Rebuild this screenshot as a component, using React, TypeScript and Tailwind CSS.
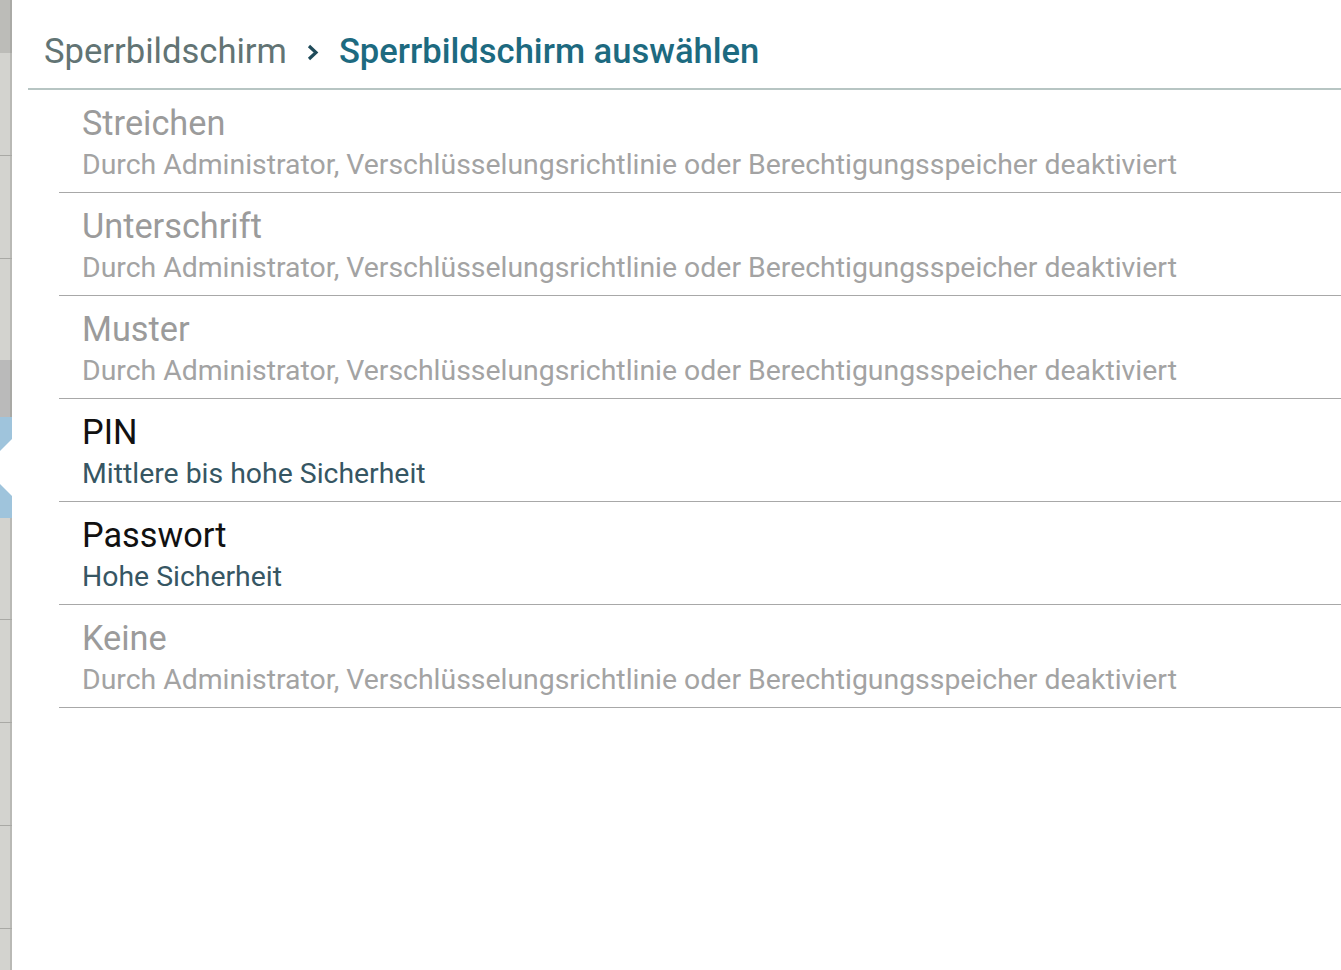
import React from "react";

const rows = [
  { t: "Streichen", s: "Durch Administrator, Verschlüsselungsrichtlinie oder Berechtigungsspeicher deaktiviert", on: false },
  { t: "Unterschrift", s: "Durch Administrator, Verschlüsselungsrichtlinie oder Berechtigungsspeicher deaktiviert", on: false },
  { t: "Muster", s: "Durch Administrator, Verschlüsselungsrichtlinie oder Berechtigungsspeicher deaktiviert", on: false },
  { t: "PIN", s: "Mittlere bis hohe Sicherheit", on: true },
  { t: "Passwort", s: "Hohe Sicherheit", on: true },
  { t: "Keine", s: "Durch Administrator, Verschlüsselungsrichtlinie oder Berechtigungsspeicher deaktiviert", on: false },
];

function Strip() {
  const seg = "border-b border-[#a9a9a5]";
  return (
    <div className="w-[12px] h-[970px] flex flex-col bg-[#d3d3cf] shadow-[inset_-2px_0_0_#b9b9b5] shrink-0">
      <div className="h-[53px] shrink-0 bg-[#bcbcb8] shadow-[inset_-2px_0_0_#aaaaa6]" />
      <div className={`h-[103px] shrink-0 ${seg}`} />
      <div className={`h-[103px] shrink-0 ${seg}`} />
      <div className="h-[101px] shrink-0" />
      <div className="h-[57px] shrink-0 bg-[#bababa] shadow-[inset_-2px_0_0_#a9a9a5]" />
      <div className="relative h-[101px] shrink-0 bg-[#9fc4dc]">
        <svg className="absolute left-0 top-[22px]" width="12" height="57" viewBox="0 0 12 57">
          <polygon points="12,0 12,57 0,45 0,12" fill="#ffffff" />
        </svg>
      </div>
      <div className={`h-[102px] shrink-0 ${seg}`} />
      <div className={`h-[103px] shrink-0 ${seg}`} />
      <div className={`h-[103px] shrink-0 ${seg}`} />
      <div className={`h-[103px] shrink-0 ${seg}`} />
      <div className="flex-1" />
    </div>
  );
}

export default function App() {
  return (
    <div className="w-[1341px] h-[970px] bg-white flex overflow-hidden" style={{ fontFamily: "Roboto, 'Noto Sans', sans-serif" }}>
      <Strip />
      <div className="flex-1 flex flex-col">
        <div className="h-[88px] flex items-start pt-[34px] pl-[16px] ml-[16px]">
          <span className="text-[34.6px] leading-none text-[#627474]">Sperrbildschirm</span>
          <svg className="ml-[20px] mr-[20px] mt-[10px]" width="12" height="17" viewBox="0 0 12 17">
            <polyline points="2,2 9,8.5 2,15" fill="none" stroke="#1f4b5a" strokeWidth="3.2" />
          </svg>
          <span className="text-[34.6px] leading-none font-medium text-[#1d6a80]">Sperrbildschirm auswählen</span>
        </div>
        <div className="ml-[16px] h-[2px] bg-[#b7c5c3]" />
        <div className="ml-[47px] flex flex-col">
          {rows.map((r) => (
            <div key={r.t} className="h-[103px] border-b border-[#a8a8a8] flex flex-col pl-[23px] pt-[16px]">
              <div className={`text-[34.3px] leading-[34px] ${r.on ? "text-[#111111]" : "text-[#9b9b9b]"}`}>{r.t}</div>
              <div className={`mt-[11px] text-[28.4px] leading-[28px] ${r.on ? "text-[#365663]" : "text-[#a3a3a3]"}`}>{r.s}</div>
            </div>
          ))}
        </div>
      </div>
    </div>
  );
}
